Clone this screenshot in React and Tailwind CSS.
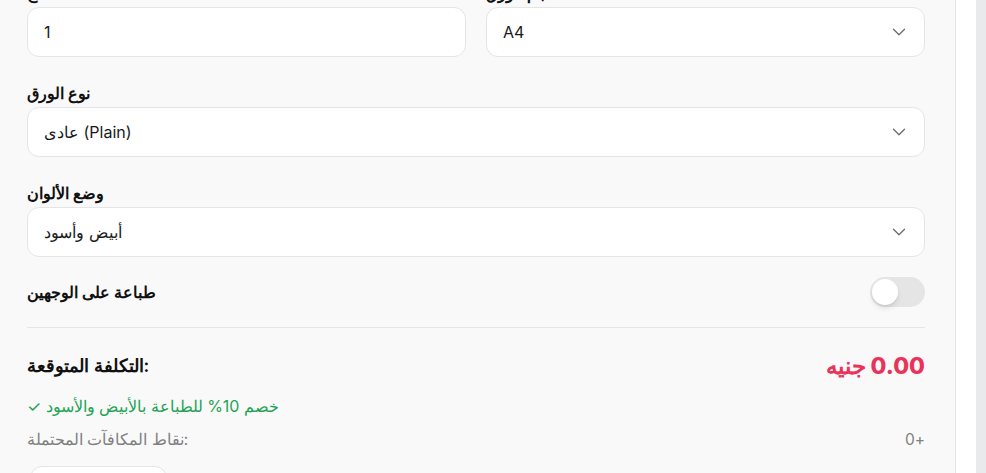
import { ChevronDown } from 'lucide-react';

const font = { fontFamily: 'Inter, sans-serif' };

const Select = ({ value }) => (
  <div className="flex h-[50px] items-center justify-between rounded-xl border border-[#e5e5e5] bg-white pl-4 pr-3.5">
    <span className="text-base text-[#1a1a1a]">{value}</span>
    <ChevronDown size={22} strokeWidth={1.5} className="text-[#707070]" />
  </div>
);

const Field = ({ label, children }) => (
  <div>
    <label className="mb-0.5 block text-base font-semibold leading-6 text-[#111]">{label}</label>
    {children}
  </div>
);

const PrintOptions = () => {
  return (
    <div className="flex-1 border-r border-[#e5e5e5] bg-[#f9f9f9] pl-[27px] pr-[30px]">
      <div className="-mt-[19px] space-y-6">
        <div className="grid grid-cols-2 gap-5">
          <Field label="عدد النسخ">
            <div className="flex h-[50px] items-center rounded-xl border border-[#e5e5e5] bg-white px-4">
              <span className="text-base text-[#1a1a1a]">1</span>
            </div>
          </Field>
          <Field label="حجم الورق">
            <Select value="A4" />
          </Field>
        </div>
        <Field label="نوع الورق">
          <Select value="عادى (Plain)" />
        </Field>
        <Field label="وضع الألوان">
          <Select value="أبيض وأسود" />
        </Field>
      </div>

      <div className="mt-5 flex h-[30px] items-center justify-between">
        <span className="text-base font-semibold text-[#111]">طباعة على الوجهين</span>
        <button className="flex h-[30px] w-[55px] items-center rounded-full bg-[#e5e5e5] px-[2px]">
          <span className="h-[26px] w-[26px] rounded-full bg-white shadow-md"></span>
        </button>
      </div>

      <div className="mt-5 border-t border-[#e5e5e5] pt-6">
        <div className="flex h-7 items-center justify-between">
          <span className="text-lg font-semibold leading-7 text-[#111]">التكلفة المتوقعة:</span>
          <span dir="rtl" className="text-[23px] font-extrabold leading-7 text-[#e8345a]">0.00 جنيه</span>
        </div>
        <p dir="rtl" className="mt-4 text-left text-base leading-5 text-[#1fa354]">خصم 10% للطباعة بالأبيض والأسود ✓</p>
        <div className="mt-3.5 flex items-center justify-between text-[15.5px] leading-5 text-[#808080]">
          <span>نقاط المكافآت المحتملة:</span>
          <span dir="rtl">+0</span>
        </div>
        <button className="ml-[3px] mt-4 h-11 w-[137px] rounded-xl border border-[#e5e5e5] bg-white text-sm text-[#333]">
          تحديث
        </button>
      </div>
    </div>
  );
};

export default function App() {
  return (
    <div className="flex h-[473px] overflow-hidden bg-white" style={font}>
      <PrintOptions />
      <div className="w-5 bg-white"></div>
      <div className="w-[10px] bg-[#e9eaec]"></div>
    </div>
  );
}
